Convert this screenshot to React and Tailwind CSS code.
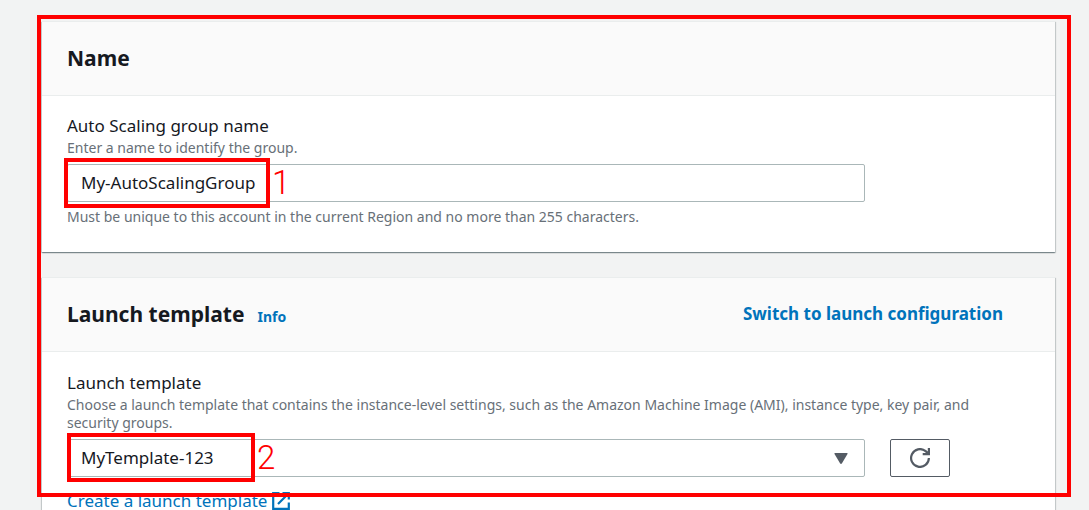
import React, { useState } from 'react';

const Card = ({ title, info, action, children }) => (
    <section className="bg-white border-t border-[#eaeded] shadow-[0_1px_1px_0_rgba(0,28,36,0.3),1px_1px_1px_0_rgba(0,28,36,0.15),-1px_1px_1px_0_rgba(0,28,36,0.15)]">
        <header className="flex items-center justify-between h-[74px] px-[25px] pb-0.5 bg-[#fafafa] border-b border-[#eaeded]">
            <div className="flex items-baseline gap-[13px]">
                <h2 className="text-[21px] leading-7 font-bold">{title}</h2>
                {info}
            </div>
            {action}
        </header>
        <div className="px-[25px] pt-5 pb-[26px]">{children}</div>
    </section>
);

const ExternalIcon = () => (
    <svg viewBox="0 0 18 18" className="w-[18px] h-[18px]" fill="none" stroke="currentColor" strokeWidth="2.2" aria-hidden="true">
        <path d="M7.5 1.2H1.2v15.6h15.6v-6.3" />
        <path d="M10.5 1.2h6.3v6.3M16.5 1.5 6 12" />
    </svg>
);

const RefreshIcon = () => (
    <svg viewBox="0 0 20 20" className="w-5 h-5" fill="none" stroke="currentColor" strokeWidth="2.2" aria-hidden="true">
        <path d="M18.9 10a8.9 8.9 0 1 1-3.4-7" />
        <path d="M18.9 0v6.1h-6.2M18.2 5.4 15 2.6" />
    </svg>
);

// Numbered callout drawn over a form control
const Step = ({ number, className }) => (
    <div className={`absolute border-4 border-[#ff0000] pointer-events-none ${className}`}>
        <span className="absolute left-full top-px pl-1.5 text-[33px] leading-10 font-light text-[#ff0000] font-[Roboto,sans-serif]">{number}</span>
    </div>
);

export default function App() {
    const [name, setName] = useState('My-AutoScalingGroup');
    const [template, setTemplate] = useState('MyTemplate-123');

    return (
        <main className="relative min-h-screen bg-[#f2f3f3] pl-[42px] pr-[34px] pt-[21px] text-[#16191f] font-['Noto_Sans',sans-serif]">
            <div className="flex flex-col gap-[25px]">
                <Card title="Name">
                    <label htmlFor="group-name" className="block text-[17px] leading-5">Auto Scaling group name</label>
                    <p className="text-sm leading-[18px] pt-[3px] text-[#687078]">Enter a name to identify the group.</p>
                    <div className="grid grid-cols-12 gap-x-[25px] pt-[7px]">
                        <div className="relative col-span-10">
                            <input
                                id="group-name"
                                type="text"
                                value={name}
                                onChange={(e) => setName(e.target.value)}
                                className="block w-full h-[38px] px-[13px] pb-0.5 text-[17px] bg-white border border-[#aab7b8] rounded-[2px] outline-none"
                            />
                            <Step number="1" className="-left-[3px] -top-1.5 w-[206px] h-[50px]" />
                        </div>
                    </div>
                    <p className="text-sm leading-[18px] pt-1.5 text-[#687078]">
                        Must be unique to this account in the current Region and no more than 255 characters.
                    </p>
                </Card>

                <Card
                    title="Launch template"
                    info={<a href="#info" className="text-sm font-bold text-[#0073bb]">Info</a>}
                    action={<button type="button" className="px-[27px] text-[17px] font-bold text-[#0073bb] cursor-pointer">Switch to launch configuration</button>}
                >
                    <label htmlFor="template" className="block text-[17px] leading-[22px]">Launch template</label>
                    <p className="text-sm leading-[18px] pt-0.5 pr-[25px] text-[#687078]">
                        Choose a launch template that contains the instance-level settings, such as the Amazon Machine Image (AMI), instance type, key pair, and security groups.
                    </p>
                    <div className="grid grid-cols-12 gap-x-[25px] pt-[7px]">
                        <div className="relative col-span-10">
                            <select
                                id="template"
                                value={template}
                                onChange={(e) => setTemplate(e.target.value)}
                                className="block w-full h-[38px] px-[13px] text-[17px] bg-white border border-[#aab7b8] rounded-[2px] outline-none appearance-none"
                            >
                                <option>MyTemplate-123</option>
                            </select>
                            <svg viewBox="0 0 14 11" className="absolute right-[17px] top-[14px] w-[14px] h-[11px] pointer-events-none" fill="#545b64" aria-hidden="true">
                                <path d="M1 0h12q1 0 .5 1L8 10.3q-1 1.2-2 0L.5 1Q0 0 1 0Z" />
                            </svg>
                            <Step number="2" className="left-0 -top-1.5 w-[188px] h-[49px]" />
                        </div>
                        <button type="button" aria-label="Refresh templates" className="col-span-2 justify-self-start flex items-center justify-center w-[60px] h-[38px] text-[#545b64] bg-white border border-[#545b64] rounded-[2px] cursor-pointer">
                            <RefreshIcon />
                        </button>
                    </div>
                    <a href="#create" className="flex items-center gap-[5px] w-fit pt-[13px] text-[17px] leading-[22px] text-[#0073bb]">
                        Create a launch template <ExternalIcon />
                    </a>
                </Card>
            </div>

            {/* Outline around the whole form */}
            <div className="absolute left-[37px] right-[18px] top-[15px] h-[482px] border-4 border-[#ff0000] pointer-events-none"></div>
        </main>
    );
}
